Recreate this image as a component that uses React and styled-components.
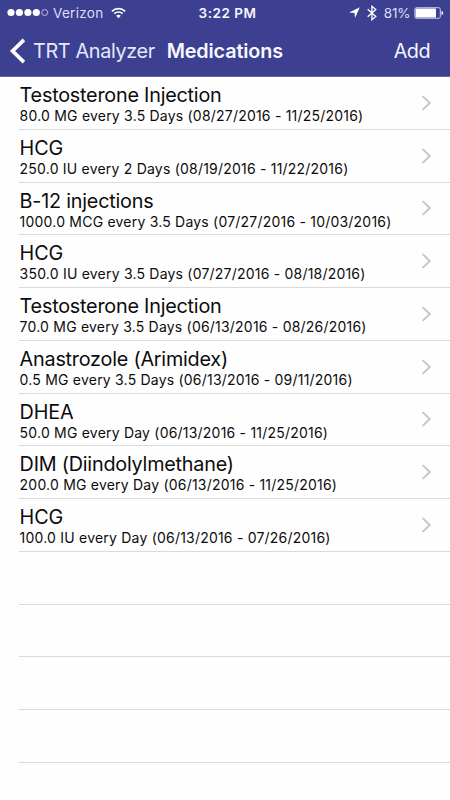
import React from "react";
import styled, { createGlobalStyle } from "styled-components";

const Global = createGlobalStyle`
  *, *::before, *::after { box-sizing: border-box; }
  body { margin: 0; background: #fefefe; }
`;

const Screen = styled.main`
  width: 450px;
  height: 800px;
  overflow: hidden;
  background: #fefefe;
  font-family: Inter, "Liberation Sans", sans-serif;
  color: #0c0c0c;
`;

const Header = styled.header`
  height: 77px;
  background: #3d4091;
  border-bottom: 1px solid #6668a5;
  color: #f6f7ff;
`;

const StatusBar = styled.div`
  height: 25px;
  display: grid;
  grid-template-columns: 1fr auto 1fr;
  align-items: center;
  padding: 0 6px 0 7px;
  font-size: 13.5px;
  line-height: 16px;
`;

const StatusGroup = styled.div`
  display: flex;
  align-items: center;
  justify-content: ${(p) => (p.$end ? "flex-end" : "flex-start")};
`;

const Carrier = styled.span`
  margin: 0 7px 0 4px;
  color: #dcdef5;
  letter-spacing: 0.3px;
`;

const Clock = styled.span`
  margin-left: 4px;
  font-weight: 600;
  letter-spacing: 0.5px;
`;

const Percent = styled.span`
  margin: 0 3.5px 0 7px;
  color: #dcdef5;
  letter-spacing: -0.1px;
`;

const NavBar = styled.nav`
  height: 51px;
  display: flex;
  align-items: center;
  padding: 0 20px 0 9px;
  font-size: 19.8px;
  line-height: 24px;
`;

const BackLink = styled.span`
  display: flex;
  align-items: center;
  gap: 7px;
  color: #e6e8fb;
  letter-spacing: -0.33px;
`;

const NavTitle = styled.h1`
  margin: 0 0 0 11.7px;
  font-size: 19.8px;
  font-weight: 600;
  letter-spacing: -0.12px;
`;

const AddButton = styled.span`
  margin-left: auto;
  letter-spacing: -0.5px;
`;

const Icon = styled.svg`
  display: block;
  flex: none;
`;

const StatusIcons = styled.div`
  display: flex;
  align-items: center;
  gap: 7px;
`;

const List = styled.ul`
  list-style: none;
  margin: 0;
  padding: 0 0 0 19px;
`;

const Row = styled.li`
  height: 52.75px;
  display: flex;
  align-items: center;
  justify-content: space-between;
  padding: 0 18.4px 0 0.6px;
  border-bottom: 1px solid #dadada;
`;

const RowText = styled.div`
  padding-top: 2.6px;
`;

const Name = styled.div`
  font-size: 19.8px;
  line-height: 24px;
  letter-spacing: ${(p) => (p.$caps ? "-0.15px" : "-0.22px")};
`;

const Dose = styled.div`
  font-size: 14px;
  line-height: 18px;
  letter-spacing: 0.21px;
`;

const medications = [
  ["Testosterone Injection", "80.0 MG every 3.5 Days (08/27/2016 - 11/25/2016)"],
  ["HCG", "250.0 IU every 2 Days (08/19/2016 - 11/22/2016)"],
  ["B-12 injections", "1000.0 MCG every 3.5 Days (07/27/2016 - 10/03/2016)"],
  ["HCG", "350.0 IU every 3.5 Days (07/27/2016 - 08/18/2016)"],
  ["Testosterone Injection", "70.0 MG every 3.5 Days (06/13/2016 - 08/26/2016)"],
  ["Anastrozole (Arimidex)", "0.5 MG every 3.5 Days (06/13/2016 - 09/11/2016)"],
  ["DHEA", "50.0 MG every Day (06/13/2016 - 11/25/2016)"],
  ["DIM (Diindolylmethane)", "200.0 MG every Day (06/13/2016 - 11/25/2016)"],
  ["HCG", "100.0 IU every Day (06/13/2016 - 07/26/2016)"],
];

const emptyRows = [0, 1, 2, 3];

function SignalDots() {
  return (
    <Icon width="42" height="9" viewBox="0 0 42 9" fill="#fff">
      <circle cx="4" cy="4.5" r="3.6" />
      <circle cx="12.4" cy="4.5" r="3.6" />
      <circle cx="20.9" cy="4.5" r="3.6" />
      <circle cx="29.3" cy="4.5" r="3.6" />
      <circle cx="37.7" cy="4.5" r="3" fill="none" stroke="#d5d8f3" strokeWidth="0.8" />
    </Icon>
  );
}

function WifiIcon() {
  return (
    <Icon width="15" height="12" viewBox="0 0 15 12" fill="none" stroke="#fff" strokeWidth="1.7">
      <path d="M0.9 4.3a9.4 9.4 0 0 1 13.2 0" />
      <path d="M3.3 6.7a6 6 0 0 1 8.4 0" />
      <path d="M5.2 8.8a3.3 3.3 0 0 1 4.6 0L7.5 11.2z" fill="#fff" stroke="none" />
    </Icon>
  );
}

function LocationIcon() {
  return (
    <Icon width="11" height="11" viewBox="0 0 11 11" fill="#fff">
      <path d="M10.8 0.2L6 11L5.5 5.9L0.1 5.6z" />
    </Icon>
  );
}

function BluetoothIcon() {
  return (
    <Icon width="10" height="16" viewBox="0 0 10 16" fill="none" stroke="#fff" strokeWidth="1.3">
      <path d="M0.7 4.2L8.8 11.5L4.9 14.7V1.3L8.8 4.5L0.7 11.8" />
    </Icon>
  );
}

function BatteryIcon() {
  return (
    <Icon width="30" height="12" viewBox="0 0 30 12">
      <rect x="0.9" y="0.7" width="25.4" height="10.6" rx="1.6" fill="none" stroke="#d5d8f3" strokeWidth="0.9" />
      <rect x="1.6" y="1.4" width="20.4" height="9.2" rx="0.6" fill="#fff" />
      <path d="M27.5 4c2.2 0.5 2.2 3.5 0 4z" fill="#fff" />
    </Icon>
  );
}

function BackChevron() {
  return (
    <Icon width="17" height="26" viewBox="0 0 17 26" fill="none" stroke="#fff" strokeWidth="3.7">
      <path d="M14.9 1.9L3.6 13L14.9 24.1" />
    </Icon>
  );
}

function Disclosure() {
  return (
    <Icon width="12" height="16" viewBox="0 0 12 16" fill="none" stroke="#c7c7ca" strokeWidth="2">
      <path d="M2.6 1.1L9.8 8L2.6 14.9" />
    </Icon>
  );
}

export default function App() {
  return (
    <Screen>
      <Global />
      <Header>
        <StatusBar>
          <StatusGroup>
            <SignalDots />
            <Carrier>Verizon</Carrier>
            <WifiIcon />
          </StatusGroup>
          <Clock>3:22 PM</Clock>
          <StatusGroup $end>
            <StatusIcons>
              <LocationIcon />
              <BluetoothIcon />
            </StatusIcons>
            <Percent>81%</Percent>
            <BatteryIcon />
          </StatusGroup>
        </StatusBar>
        <NavBar>
          <BackLink>
            <BackChevron />
            TRT Analyzer
          </BackLink>
          <NavTitle>Medications</NavTitle>
          <AddButton>Add</AddButton>
        </NavBar>
      </Header>
      <List>
        {medications.map(([name, dose], i) => (
          <Row key={i}>
            <RowText>
              <Name $caps={name.length < 5}>{name}</Name>
              <Dose>{dose}</Dose>
            </RowText>
            <Disclosure />
          </Row>
        ))}
        {emptyRows.map((i) => (
          <Row key={`empty-${i}`} />
        ))}
      </List>
    </Screen>
  );
}
